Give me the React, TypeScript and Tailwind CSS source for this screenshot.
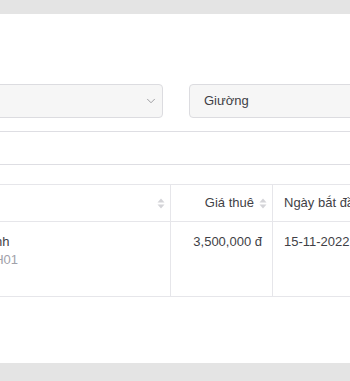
import { ChevronDown } from 'lucide-react'

function SortIcon() {
  return (
    <svg width="8" height="11" viewBox="0 0 8 11" className="shrink-0">
      <path d="M4 0.5 L7.5 4.5 H0.5 Z" fill="#d4d4d8" />
      <path d="M4 10.5 L7.5 6.5 H0.5 Z" fill="#d4d4d8" />
    </svg>
  )
}

export default function App() {
  return (
    <div
      className="w-[350px] h-[381px] bg-[#e4e4e4] flex flex-col overflow-hidden text-[13px] text-[#3f3f46]"
      style={{ fontFamily: '"Liberation Sans", Arial, sans-serif' }}
    >
      <div className="h-[14px] shrink-0" />
      <div className="h-[349px] shrink-0 bg-white overflow-hidden">
        <div className="ml-[-100px] w-[600px] pt-[70px]">
          {/* bộ lọc */}
          <div className="flex gap-[26px]">
            <div className="w-[263px] h-[34px] rounded-[4px] border border-[#dcdce0] bg-[#f6f6f6] flex items-center justify-end pr-[4px]">
              <ChevronDown size={14} strokeWidth={1.4} className="text-[#8a8a90]" />
            </div>
            <div className="w-[250px] h-[34px] rounded-[4px] border border-[#dcdce0] bg-[#f6f6f6] flex items-center pl-[14px] text-[#3f3f46]">
              Giường
            </div>
          </div>

          <div className="mt-[13px] border-t border-[#dedee3]" />
          <div className="mt-[32px] border-t border-[#dedee3]" />

          {/* bảng */}
          <div className="mt-[19px] border-t border-[#e6e6ea]">
            <div className="flex h-[37px] border-b border-[#e6e6ea]">
              <div className="w-[271px] flex items-center justify-end pr-[5px] border-r border-[#e6e6ea]">
                <SortIcon />
              </div>
              <div className="w-[102px] flex items-center justify-end gap-[5px] pr-[5px] border-r border-[#e6e6ea]">
                <span>Giá thuê</span>
                <SortIcon />
              </div>
              <div className="flex-1 flex items-center pl-[11px]">Ngày bắt đầu</div>
            </div>
            <div className="flex h-[75px] border-b border-[#e6e6ea] leading-[18px]">
              <div className="w-[271px] pt-[11px] pl-[38px] border-r border-[#e6e6ea]">
                <div>Phòng Xanh</div>
                <div className="text-[#a1a1aa]">Khu A - P.H01</div>
              </div>
              <div className="w-[102px] pt-[11px] pr-[10px] text-right border-r border-[#e6e6ea]">
                3,500,000 đ
              </div>
              <div className="flex-1 pt-[11px] pl-[11px]">15-11-2022</div>
            </div>
          </div>
        </div>
      </div>
    </div>
  )
}
